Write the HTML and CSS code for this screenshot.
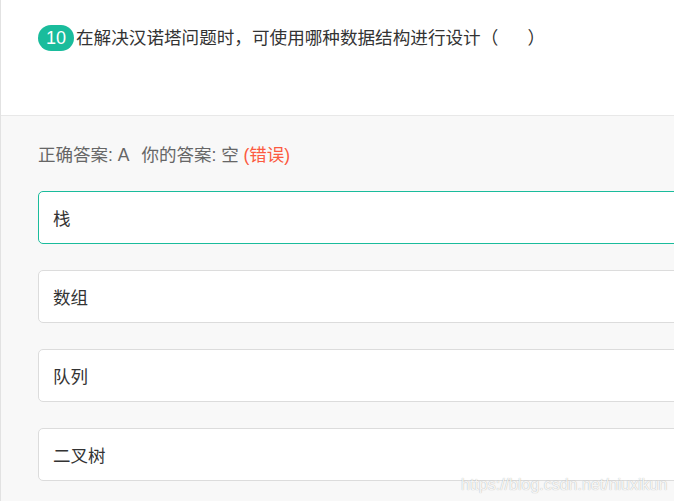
FILE: index.html
```html
<!DOCTYPE html>
<html lang="zh-CN">
<head>
<meta charset="utf-8">
<title>题目</title>
<link rel="stylesheet" href="styles.css">
</head>
<body>
<div class="page">
  <section class="question">
    <span class="num">10</span><span class="q-text">在解决汉诺塔问题时，可使用哪种数据结构进行设计（&nbsp;&nbsp;&nbsp;&nbsp;&nbsp;&nbsp;）</span>
  </section>
  <section class="answers">
    <p class="result">正确答案: A<span class="gap"></span>你的答案: 空 <span class="wrong">(错误)</span></p>
    <ul class="options">
      <li class="option correct">栈</li>
      <li class="option">数组</li>
      <li class="option">队列</li>
      <li class="option">二叉树</li>
    </ul>
  </section>
  <div class="watermark">https://blog.csdn.net/niuxikun</div>
</div>
</body>
</html>
```
FILE: styles.css
```css
html, body {
  margin: 0;
  padding: 0;
  overflow: hidden;
  background: #f8f8f8;
}
body {
  font-family: "Liberation Sans", "Noto Sans CJK SC", sans-serif;
  color: #333;
}
.page {
  position: relative;
  width: 760px;
  height: 501px;
  border-left: 1px solid #e2e2e2;
  background: #f8f8f8;
}
.question {
  background: #fff;
  height: 116px;
  box-sizing: border-box;
  padding: 25px 0 0 37px;
  border-bottom: 1px solid #e8e8e8;
  display: flex;
  align-items: flex-start;
}
.num {
  display: inline-flex;
  align-items: center;
  justify-content: center;
  width: 36px;
  height: 26px;
  border-radius: 13px;
  background: #1abc9c;
  color: #fff;
  font-size: 18px;
  line-height: 26px;
  margin-right: 2px;
}
.q-text {
  font-size: 17.6px;
  line-height: 26px;
  color: #333;
}
.answers {
  padding: 29px 0 0 37px;
}
.result {
  margin: 0;
  font-size: 17.5px;
  line-height: 20px;
  color: #666;
}
.gap {
  display: inline-block;
  width: 12px;
}
.wrong {
  color: #fc5a40;
}
.options {
  list-style: none;
  margin: 26px 0 0;
  padding: 0;
  display: flex;
  flex-direction: column;
  gap: 26px;
}
.option {
  height: 53px;
  box-sizing: border-box;
  border: 1px solid #dcdcdc;
  border-radius: 5px;
  background: #fff;
  padding-left: 14px;
  display: flex;
  align-items: center;
  font-size: 17.5px;
  color: #333;
}
.option.correct {
  border-color: #1abc9c;
}
.watermark {
  position: absolute;
  left: 460px;
  top: 476px;
  font-family: "Liberation Sans", sans-serif;
  font-size: 16px;
  line-height: 18px;
  color: rgba(255, 255, 255, 0.9);
  text-shadow: 0 0 1px rgba(0, 0, 0, 0.35);
}
```
